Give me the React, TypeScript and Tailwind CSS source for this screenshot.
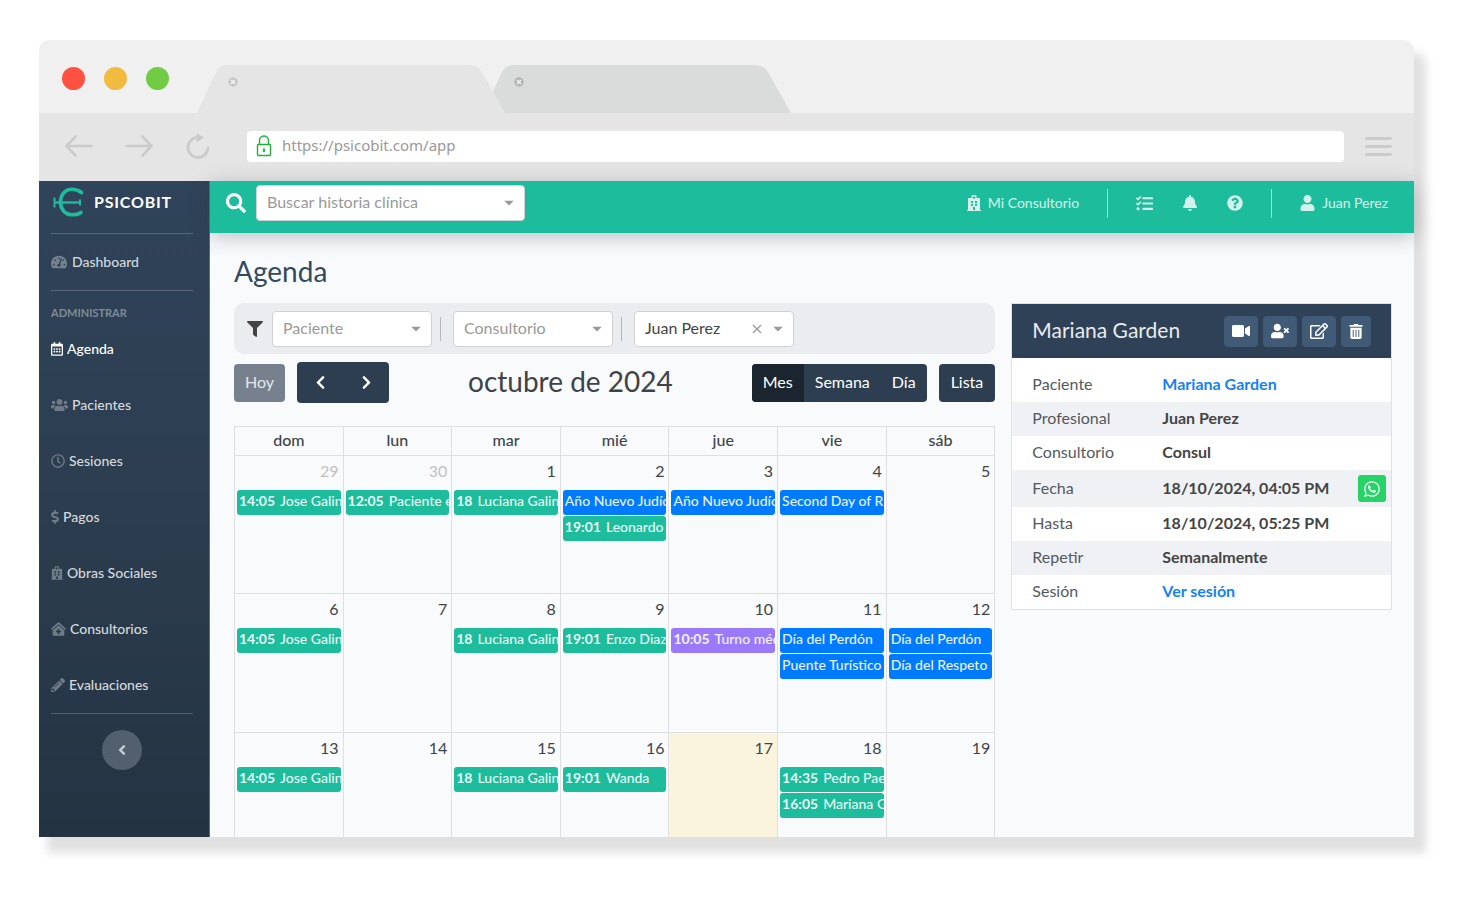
import type { ReactNode } from 'react';
import { useState } from 'react';
import {
  FaAngleLeft,
  FaBell,
  FaChevronLeft,
  FaChevronRight,
  FaClinicMedical,
  FaDollarSign,
  FaFilter,
  FaHospital,
  FaPencilAlt,
  FaQuestionCircle,
  FaRegCalendarAlt,
  FaRegClock,
  FaRegEdit,
  FaSearch,
  FaTachometerAlt,
  FaTasks,
  FaTrashAlt,
  FaUser,
  FaUsers,
  FaUserTimes,
  FaVideo,
  FaWhatsapp,
} from 'react-icons/fa';

type CalendarEvent = { time?: string; title: string; color: 'green' | 'blue' | 'purple' };
type Day = { number: number; muted?: boolean; today?: boolean; events?: CalendarEvent[] };

const eventColors = {
  green: 'bg-[#1cbc9c]',
  blue: 'bg-[#007aff]',
  purple: 'bg-[#9b79fb]',
};

const weekDays = ['dom', 'lun', 'mar', 'mié', 'jue', 'vie', 'sáb'];

const jose: CalendarEvent = { time: '14:05', title: 'Jose Galin', color: 'green' };
const luciana: CalendarEvent = { time: '18', title: 'Luciana Galin', color: 'green' };

const weeks: { height: string; days: Day[] }[] = [
  {
    height: 'h-[138px]',
    days: [
      { number: 29, muted: true, events: [jose] },
      { number: 30, muted: true, events: [{ time: '12:05', title: 'Paciente e', color: 'green' }] },
      { number: 1, events: [luciana] },
      {
        number: 2,
        events: [
          { title: 'Año Nuevo Judío', color: 'blue' },
          { time: '19:01', title: 'Leonardo', color: 'green' },
        ],
      },
      { number: 3, events: [{ title: 'Año Nuevo Judío', color: 'blue' }] },
      { number: 4, events: [{ title: 'Second Day of R', color: 'blue' }] },
      { number: 5 },
    ],
  },
  {
    height: 'h-[139px]',
    days: [
      { number: 6, events: [jose] },
      { number: 7 },
      { number: 8, events: [luciana] },
      { number: 9, events: [{ time: '19:01', title: 'Enzo Diaz', color: 'green' }] },
      { number: 10, events: [{ time: '10:05', title: 'Turno méd', color: 'purple' }] },
      {
        number: 11,
        events: [
          { title: 'Día del Perdón', color: 'blue' },
          { title: 'Puente Turístico', color: 'blue' },
        ],
      },
      {
        number: 12,
        events: [
          { title: 'Día del Perdón', color: 'blue' },
          { title: 'Día del Respeto', color: 'blue' },
        ],
      },
    ],
  },
  {
    height: 'h-[104px]',
    days: [
      { number: 13, events: [jose] },
      { number: 14 },
      { number: 15, events: [luciana] },
      { number: 16, events: [{ time: '19:01', title: 'Wanda', color: 'green' }] },
      { number: 17, today: true },
      {
        number: 18,
        events: [
          { time: '14:35', title: 'Pedro Pae', color: 'green' },
          { time: '16:05', title: 'Mariana G', color: 'green' },
        ],
      },
      { number: 19 },
    ],
  },
];

const navItems = [
  { label: 'Agenda', icon: FaRegCalendarAlt, iconWidth: 'w-3', active: true },
  { label: 'Pacientes', icon: FaUsers, iconWidth: 'w-[17px]' },
  { label: 'Sesiones', icon: FaRegClock, iconWidth: 'w-[14px]' },
  { label: 'Pagos', icon: FaDollarSign, iconWidth: 'w-2' },
  { label: 'Obras Sociales', icon: FaHospital, iconWidth: 'w-3' },
  { label: 'Consultorios', icon: FaClinicMedical, iconWidth: 'w-[15px]' },
  { label: 'Evaluaciones', icon: FaPencilAlt, iconWidth: 'w-[14px]' },
];

function BrowserTab({ className, closeColor }: { className: string; closeColor: string }) {
  return (
    <div className={`relative h-12 w-[308px] ${className}`}>
      <svg viewBox="0 0 308 48" className="h-12 w-full" fill="currentColor">
        <path d="M0 48 L19 7 Q23 0 31 0 H272 Q280 0 285 7 L308 48 Z" />
      </svg>
      <button aria-label="Cerrar" className={`absolute top-3 left-[31px] ${closeColor}`}>
        <svg viewBox="0 0 10 10" className="size-[10px]">
          <circle cx="5" cy="5" r="4.7" fill="currentColor" />
          <path d="M3 3 L7 7 M7 3 L3 7" stroke="#f4f4f4" strokeWidth="1.4" />
        </svg>
      </button>
    </div>
  );
}

function BrowserChrome() {
  return (
    <div>
      <div className="flex h-[73px] items-end rounded-t-[10px] bg-[#f0f0f0] pl-[23px]">
        <div className="flex gap-[19px] self-center pt-1">
          <span className="size-[23px] rounded-full bg-[#ff5142]" />
          <span className="size-[23px] rounded-full bg-[#f1bb41]" />
          <span className="size-[23px] rounded-full bg-[#71cc43]" />
        </div>
        <BrowserTab className="z-10 ml-7 text-[#e5e5e5]" closeColor="text-[#c8c8c8]" />
        <BrowserTab className="-ml-[22px] text-[#dadcdb]" closeColor="text-[#b4b6b6]" />
      </div>
      <div className="flex h-[68px] items-center bg-[#e5e5e5] pr-[22px] pb-[2px] pl-[26px] text-[#cbcbcb]">
        <div className="flex items-center gap-8">
          <button aria-label="Atrás">
            <svg viewBox="0 0 28 22" className="h-[22px] w-7" fill="none" stroke="currentColor" strokeWidth="2.6" strokeLinecap="round" strokeLinejoin="round">
              <path d="M26.5 11 H1.5 M10.5 1.5 L1.5 11 L10.5 20.5" />
            </svg>
          </button>
          <button aria-label="Adelante">
            <svg viewBox="0 0 28 22" className="h-[22px] w-7" fill="none" stroke="currentColor" strokeWidth="2.6" strokeLinecap="round" strokeLinejoin="round">
              <path d="M1.5 11 H26.5 M17.5 1.5 L26.5 11 L17.5 20.5" />
            </svg>
          </button>
          <button aria-label="Recargar">
            <svg viewBox="0 0 24 26" className="h-[26px] w-6" fill="none">
              <path d="M13 4.5 A10 10 0 1 0 23 15" stroke="currentColor" strokeWidth="2.8" strokeLinecap="round" />
              <path d="M11.5 0 L19 4.5 L11.5 9.5 Z" fill="currentColor" />
            </svg>
          </button>
        </div>
        <div className="ml-[38px] flex h-[31px] flex-1 items-center gap-[10px] rounded bg-white pl-[9px]">
          <svg viewBox="0 0 16 22" className="h-[22px] w-4" fill="none" stroke="#1fae3a" strokeWidth="1.4">
            <rect x="1.5" y="9.5" width="13" height="11" rx="1" />
            <path d="M3.5 9.5 V5.5 A4.5 4.5 0 0 1 12.5 5.5 V9.5" />
            <path d="M8 13 V17 M6.8 15.8 H9.2" />
          </svg>
          <input
            aria-label="Dirección"
            defaultValue="https://psicobit.com/app"
            className="flex-1 pb-[2px] font-['Noto_Sans',sans-serif] text-[15px] text-[#999] outline-none"
          />
        </div>
        <button aria-label="Menú" className="ml-[21px] flex w-[27px] flex-col gap-[5px]">
          <span className="h-[3px] rounded-full bg-[#cbcbcb]" />
          <span className="h-[3px] rounded-full bg-[#cbcbcb]" />
          <span className="h-[3px] rounded-full bg-[#cbcbcb]" />
        </button>
      </div>
    </div>
  );
}

function Sidebar() {
  return (
    <aside className="flex w-[171px] shrink-0 flex-col border-r border-[#5d6b7a] bg-linear-to-b from-[#2f435a] via-[#2c3e50] via-45% to-[#243342] pr-4 pl-3 text-sm font-medium">
      <a href="#" className="flex h-[53px] items-center gap-2 border-b border-white/20 pb-[10px] text-base font-bold tracking-wider text-white">
        <svg viewBox="0 0 35 32" className="h-8 w-[35px]" fill="none" stroke="#1cbc9c">
          <path d="M30.5 6.5 C27.5 4 24.5 3.2 21 3.2 C14 3.2 9.5 9 9.5 16 C9.5 23.5 14.5 28.8 21 28.8 C25 28.8 27.8 28.2 30 26.5" strokeWidth="3.6" strokeLinecap="round" />
          <path d="M3 16.5 H29" strokeWidth="2.4" />
          <path d="M3.5 11.5 V21.5 M29 13.5 V19.5" strokeWidth="2" />
        </svg>
        PSICOBIT
      </a>
      <a href="#" className="flex h-[57px] items-center gap-[5px] border-b border-white/20 text-[#d5d9dd]">
        <FaTachometerAlt className="size-4 text-[#75818e]" />
        Dashboard
      </a>
      <p className="mt-[14px] mb-[2px] text-[11px] leading-4 font-bold text-[#808b97]">ADMINISTRAR</p>
      <nav className="border-b border-white/20">
        {navItems.map(({ label, icon: Icon, iconWidth, active }) => (
          <a
            key={label}
            href="#"
            className={`flex h-14 items-center gap-1 pb-1 last:h-[54px] last:pb-[2px] ${active ? 'text-white' : 'text-[#d5d9dd]'}`}
          >
            <Icon className={`h-[14px] ${iconWidth} ${active ? 'text-white' : 'text-[#6f7b88]'}`} />
            {label}
          </a>
        ))}
      </nav>
      <button aria-label="Contraer" className="mt-4 flex size-10 items-center justify-center self-center rounded-full bg-[#525f6e] text-[#c5cad0]">
        <FaAngleLeft className="size-4" />
      </button>
    </aside>
  );
}

function TopBar() {
  return (
    <header className="z-10 flex h-[52px] items-center bg-[#1cbc9c] pr-[26px] pb-2 pl-4 text-sm text-white/80 shadow-[0_4px_20px_rgba(58,59,69,0.3)]">
      <FaSearch className="size-5 text-white" />
      <SelectBox label="Buscar historia clínica" className="ml-[10px] w-[269px]" />
      <div className="ml-auto flex items-center">
        <a href="#" className="flex items-center gap-[7px]">
          <FaHospital className="h-4 w-[14px]" />
          Mi Consultorio
        </a>
        <div className="mx-7 flex items-center gap-[29px] border-x border-white/60 px-7 py-[6px]">
          <button aria-label="Tareas"><FaTasks className="size-[17px]" /></button>
          <button aria-label="Notificaciones"><FaBell className="size-4" /></button>
          <button aria-label="Ayuda"><FaQuestionCircle className="size-4" /></button>
        </div>
        <a href="#" className="flex items-center gap-[7px]">
          <FaUser className="h-4 w-[15px]" />
          Juan Perez
        </a>
      </div>
    </header>
  );
}

function SelectBox({ label, value, className }: { label: string; value?: string; className: string }) {
  return (
    <div className={`relative ${className}`}>
      <select
        aria-label={label}
        className={`h-9 w-full appearance-none rounded border border-[#cfd1d4] bg-white px-[10px] pb-[2px] text-base ${value ? 'text-[#444]' : 'text-[#999]'}`}
      >
        <option>{value ?? label}</option>
      </select>
      {value && (
        <button aria-label="Quitar" className="absolute top-1/2 right-8 -translate-y-1/2 text-[#999]">
          <svg viewBox="0 0 10 10" className="size-[10px]" fill="none" stroke="currentColor" strokeWidth="1.3">
            <path d="M1 1 L9 9 M9 1 L1 9" />
          </svg>
        </button>
      )}
      <svg viewBox="0 0 10 5" className="pointer-events-none absolute top-1/2 right-[11px] h-[5px] w-[10px] -translate-y-1/2" fill="#999">
        <path d="M0 0 H10 L5 5 Z" />
      </svg>
    </div>
  );
}

function Filters() {
  return (
    <div className="flex h-[51px] items-center rounded-[10px] bg-[#ebecf0] pl-[13px]">
      <FaFilter className="mr-[9px] size-4 text-[#444]" />
      <SelectBox label="Paciente" className="w-40" />
      <span className="mr-3 ml-2 h-6 w-px bg-[#b5b7ba]" />
      <SelectBox label="Consultorio" className="w-40" />
      <span className="mr-3 ml-2 h-6 w-px bg-[#b5b7ba]" />
      <SelectBox label="Profesional" value="Juan Perez" className="w-40" />
    </div>
  );
}

function Toolbar() {
  const [view, setView] = useState('Mes');

  return (
    <div className="mt-2 flex items-center justify-between text-base text-white">
      <div className="flex items-center gap-3">
        <button className="h-[38px] rounded bg-[#76818d] px-[11px] pb-[2px] text-white/80">Hoy</button>
        <div className="flex h-[41px] w-[92px] rounded bg-[#2c3e50]">
          <button aria-label="Mes anterior" className="flex flex-1 items-center justify-center"><FaChevronLeft className="size-[15px]" /></button>
          <button aria-label="Mes siguiente" className="flex flex-1 items-center justify-center"><FaChevronRight className="size-[15px]" /></button>
        </div>
      </div>
      <h3 className="pb-1 text-[28px] leading-8 text-[#3e4348]">octubre de 2024</h3>
      <div className="flex gap-3">
        <div className="flex h-[38px] overflow-hidden rounded bg-[#2c3e50]">
          {['Mes', 'Semana', 'Día'].map((name) => (
            <button
              key={name}
              onClick={() => setView(name)}
              className={`px-[11px] pb-[2px] ${view === name ? 'bg-[#1a252f]' : ''}`}
            >
              {name}
            </button>
          ))}
        </div>
        <button className="h-[38px] rounded bg-[#2c3e50] px-3 pb-[2px]">Lista</button>
      </div>
    </div>
  );
}

function Calendar() {
  return (
    <table className="mt-[23px] w-full table-fixed border-collapse text-base text-[#3f4449]">
      <thead>
        <tr className="h-[29px]">
          {weekDays.map((day) => (
            <th key={day} className="border border-[#dddfe1] p-0 pb-[2px] leading-6 font-medium">{day}</th>
          ))}
        </tr>
      </thead>
      <tbody>
        {weeks.map((week) => (
          <tr key={week.days[0].number} className={week.height}>
            {week.days.map((day) => (
              <td
                key={day.number}
                className={`border-x border-t border-[#dddfe1] p-0 align-top ${day.today ? 'bg-[#faf4dc]' : ''}`}
              >
                <p className={`pt-[3px] pr-1 text-right leading-6 ${day.muted ? 'text-[#bfc1c4]' : ''}`}>{day.number}</p>
                <div className="mt-[7px] flex flex-col gap-px px-[2px]">
                  {day.events?.map((event) => (
                    <a
                      key={event.title}
                      href="#"
                      className={`flex h-[25px] gap-[5px] overflow-hidden rounded-[3px] px-[2px] text-sm leading-[22px] font-medium whitespace-nowrap text-white/90 ${eventColors[event.color]}`}
                    >
                      {event.time && <b>{event.time}</b>}
                      <span>{event.title}</span>
                    </a>
                  ))}
                </div>
              </td>
            ))}
          </tr>
        ))}
      </tbody>
    </table>
  );
}

function ActionButton({ label, children }: { label: string; children: ReactNode }) {
  return (
    <button aria-label={label} className="flex h-[31px] items-center rounded bg-[#415b76] px-2 text-white">
      {children}
    </button>
  );
}

function AppointmentCard() {
  const rows: { label: string; value: ReactNode; whatsapp?: boolean }[] = [
    { label: 'Paciente', value: <a href="#" className="text-[#1481f7]">Mariana Garden</a> },
    { label: 'Profesional', value: 'Juan Perez' },
    { label: 'Consultorio', value: 'Consul' },
    { label: 'Fecha', value: '18/10/2024, 04:05 PM', whatsapp: true },
    { label: 'Hasta', value: '18/10/2024, 05:25 PM' },
    { label: 'Repetir', value: 'Semanalmente' },
    { label: 'Sesión', value: <a href="#" className="text-[#1481f7]">Ver sesión</a> },
  ];

  return (
    <section className="self-start border border-[#dfe1e4] bg-white">
      <div className="flex h-[54px] items-center justify-between bg-[#2e4156] px-5">
        <h3 className="pb-[2px] text-[21px] text-[#e8ebee]">Mariana Garden</h3>
        <div className="flex gap-[5px]">
          <ActionButton label="Videollamada"><FaVideo className="h-4 w-[18px]" /></ActionButton>
          <ActionButton label="Cancelar turno"><FaUserTimes className="h-4 w-[18px]" /></ActionButton>
          <ActionButton label="Editar"><FaRegEdit className="h-4 w-[18px]" /></ActionButton>
          <ActionButton label="Eliminar"><FaTrashAlt className="h-[15px] w-[14px]" /></ActionButton>
        </div>
      </div>
      <table className="mt-[10px] w-full text-base text-[#54595e]">
        <tbody>
          {rows.map((row) => (
            <tr key={row.label} className={`even:bg-[#f0f1f5] ${row.whatsapp ? 'h-[37px]' : 'h-[34px]'}`}>
              <th className="w-[150px] p-0 pb-[2px] pl-5 text-left font-normal">{row.label}</th>
              <td className="p-0 pr-[5px] font-bold text-[#444]">
                <div className="flex items-center justify-between">
                  <span className="pb-[2px]">{row.value}</span>
                  {row.whatsapp && (
                    <button aria-label="WhatsApp" className="flex h-[27px] w-7 items-center justify-center rounded-[3px] bg-[#25d366] text-white">
                      <FaWhatsapp className="size-[18px]" />
                    </button>
                  )}
                </div>
              </td>
            </tr>
          ))}
        </tbody>
      </table>
    </section>
  );
}

export default function App() {
  return (
    <div className="min-h-screen bg-white pt-10 pr-[69px] pb-20 pl-[39px] font-[Lato,sans-serif]">
      <div className="rounded-t-[10px] shadow-[10px_14px_10px_2px_rgba(0,0,0,0.12)]">
        <BrowserChrome />
        <div className="flex">
          <Sidebar />
          <div className="flex min-w-0 flex-1 flex-col bg-[#f8fafc]">
            <TopBar />
            <main className="pr-[22px] pl-6">
              <h1 className="mt-[18px] text-[28px] leading-10 text-[#34495e]">Agenda</h1>
              <div className="mt-3 grid grid-cols-[2fr_1fr] gap-4">
                <div className="min-w-0">
                  <Filters />
                  <Toolbar />
                  <Calendar />
                </div>
                <AppointmentCard />
              </div>
            </main>
          </div>
        </div>
      </div>
    </div>
  );
}
